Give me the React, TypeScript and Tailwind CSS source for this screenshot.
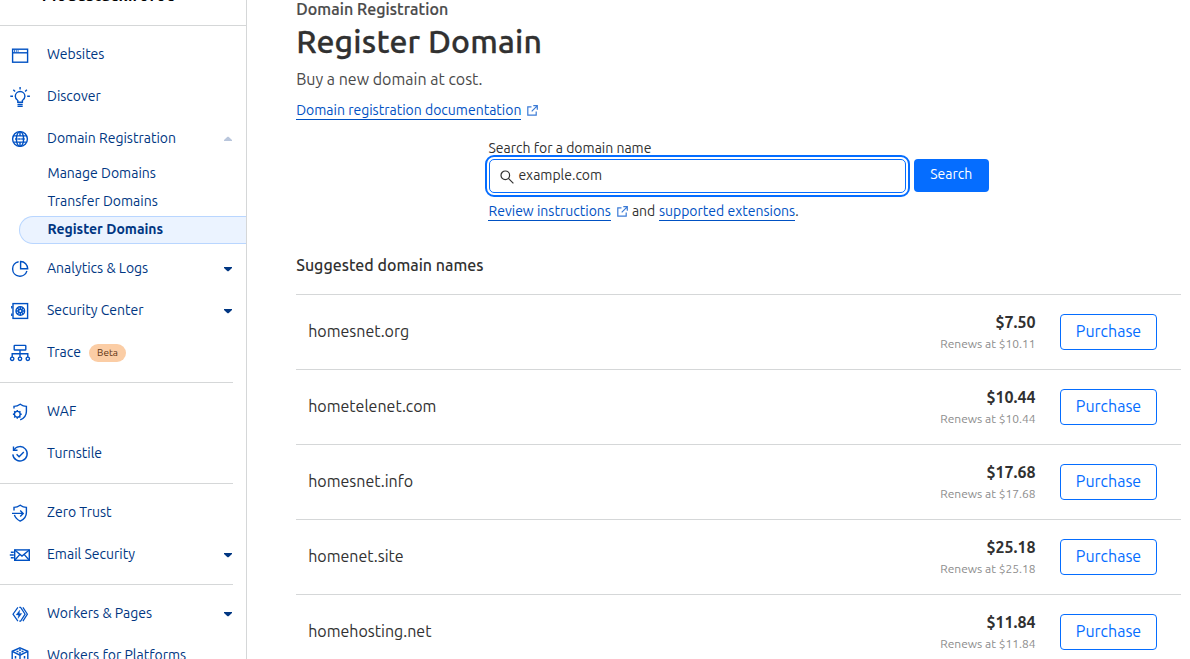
import React from "react";

type IconProps = { children: React.ReactNode };

function Icon({ children }: IconProps) {
  return (
    <svg width="22" height="22" viewBox="0 0 22 22" fill="none" stroke="#0051c3" strokeWidth="1.4" className="shrink-0">
      {children}
    </svg>
  );
}

const icons: Record<string, React.ReactNode> = {
  websites: <><rect x="3.6" y="5.2" width="15" height="13" /><path d="M3.600 8.800h15" /><path d="M5 7h5" strokeDasharray="1 .8" /></>,
  discover: <><path d="M8.8 16.2v-1.7C7.2 13.600 6.300 12 6.300 10.300a4.800 4.800 0 0 1 9.600 0c0 1.700-.9 3.300-2.500 4.200v1.700z" /><path d="M8.500 18.400h5.200M8.500 20.300h5.200M11.100 1v2.500M4.300 3.700l1.800 1.800M17.900 3.700l-1.800 1.800M1.300 10.300h2.700M18.200 10.300h2.700" /></>,
  globe: <><circle cx="11" cy="11" r="7.400" /><ellipse cx="11" cy="11" rx="3.600" ry="7.400" /><path d="M11 3.600v4.600M11 13.800v4.600M4.500 7.900h13M4.500 14.100h13" /><path d="M6 11h10" strokeWidth="1.800" strokeDasharray="2.600 .5" opacity=".7" /></>,
  chart: <><path d="M9.600 3.700a7.300 7.300 0 1 0 8.300 9.300" /><path d="M11.600 3.500v7.300h7.100a7.200 7.200 0 0 0-7.100-7.300z" /></>,
  safe: <><rect x="4" y="3.600" width="14.600" height="14.800" /><circle cx="11.300" cy="11" r="4.300" /><circle cx="11.300" cy="11" r="1.700" /><path d="M11.300 6.700v2.600M11.300 12.700v2.600M7 11h2.600M13 11h2.600M8.300 8l1.800 1.800M12.500 12.200l1.800 1.800M14.300 8l-1.800 1.800M10.100 12.200L8.300 14M2.800 6v2.500M2.800 13.500V16" /></>,
  trace: <><rect x="5.200" y="3.400" width="11.600" height="4.600" rx=".6" /><path d="M11 8v7M3.200 15v-3.300h15.600V15" /><circle cx="3.200" cy="16.800" r="1.700" /><circle cx="11" cy="16.800" r="1.700" /><circle cx="18.800" cy="16.800" r="1.700" /></>,
  waf: <><path d="M5 7.500V5.400c2.200 0 4.300-.8 6.200-2.200 1.900 1.400 4 2.200 6.200 2.200v5c0 3.800-2.200 6.700-6.200 8.500" /><circle cx="8.300" cy="13.300" r="2.900" /><path d="M8.300 8.900v1.600M8.300 16.100v1.600M3.900 13.300h1.600M11.100 13.300h1.600M5.200 10.200l1.200 1.200M10.200 15.200l1.200 1.200M11.400 10.200l-1.200 1.200M6.400 15.200l-1.200 1.200" /></>,
  turnstile: <><path d="M4.900 6.900A7.200 7.200 0 1 1 3.800 11.400" /><path d="M4.500 3.400v3.800h4" /><path d="m7.600 11.300 2.500 2.500 4.700-4.700" /></>,
  zero: <><path d="M5 8.600V5.400c2.200 0 4.300-.8 6.200-2.200 1.900 1.400 4 2.200 6.200 2.200v5c0 3.800-2.200 6.900-6.200 8.700-3-1.400-5-3.500-5.800-6.200" /><path d="M3 11.400h11M11.200 8.400l3 3-3 3" /></>,
  email: <><rect x="5.700" y="5.900" width="14.600" height="10.400" /><path d="m5.700 6 7.300 6 7.300-6M5.700 16.200l5.200-5.800M20.300 16.200l-5.200-5.800M1.800 8.200h3M.8 11h4M1.800 13.800h3" /></>,
  workers: <><path d="M8.900 4.300 4 11.200l4.900 6.900M10.300 4.300h1.300l4.500 6.900-4.500 6.900h-1.300M13.900 4.300l4.500 6.900-4.500 6.900" strokeWidth="1.200" /><path d="M10.800 7 7 11.900h2.500L9 15.500l3.800-5h-2.500z" fill="#0051c3" strokeWidth=".3" /></>,
  platforms: <><path d="m11 2.800 7.800 3.500v9L11 19.300l-7.800-4v-9z" /><path d="m3.200 6.300 7.800 3.900 7.800-3.900M11 10.200v9" /><path d="M10 4.900h2M7.500 6.400h2M12.500 6.400h2M10 7.900h2M6.500 11v2.500M15.500 11v2.500" strokeWidth="1.500" /></>,
};

type NavItemProps = {
  icon: string;
  label: string;
  arrow?: "up" | "down";
  badge?: string;
};

function NavItem({ icon, label, arrow, badge }: NavItemProps) {
  return (
    <a className="flex h-[42px] items-center pr-[14px] pl-[9px]">
      <span className="mt-0.5 flex"><Icon>{icons[icon]}</Icon></span>
      <span className="ml-4 text-[14px] whitespace-nowrap">{label}</span>
      {badge && (
        <span className="mt-px ml-2 flex h-[18px] w-[37px] items-center justify-center rounded-full bg-[#fbcda5] pb-px text-[10px] text-[#5c3212]">
          {badge}
        </span>
      )}
      {arrow && (
        <svg width="8" height="4" viewBox="0 0 8 4" className="mt-0.5 ml-auto overflow-visible">
          {arrow === "up" ? <path d="M3.500 -.3h1L8 3v1H0V3z" fill="#b9c6dc" /> : <path d="M0 0h8v1L4.500 4.300h-1L0 1z" fill="#003682" />}
        </svg>
      )}
    </a>
  );
}

function Divider() {
  return <div className="mt-[9px] mr-[13px] mb-[7px] h-px bg-[#d5d7d8]" />;
}

function Sidebar() {
  return (
    <aside className="h-full w-[247px] shrink-0 overflow-hidden border-r border-[#d5d7d8] text-[#003682]">
      <div className="flex h-[26px] items-start border-b border-[#d5d7d8] pl-[42px]">
        <span className="-mt-[15px] text-[16px] leading-5 font-bold tracking-[0.4px] whitespace-nowrap text-black">Modestack.foroc</span>
      </div>
      <nav className="pt-[7px]">
        <NavItem icon="websites" label="Websites" />
        <NavItem icon="discover" label="Discover" />
        <NavItem icon="globe" label="Domain Registration" arrow="up" />
        <div className="mb-[3px] text-[14px] leading-7">
          <a className="block h-7 pl-[47.5px]">Manage Domains</a>
          <a className="block h-7 pl-[47.5px]">Transfer Domains</a>
          <a className="mt-px ml-[19px] block h-7 rounded-l-full border border-r-0 border-[#b9d6ff] bg-[#ebf3ff] pl-[27.5px] leading-6 font-bold">
            Register Domains
          </a>
        </div>
        <NavItem icon="chart" label="Analytics & Logs" arrow="down" />
        <NavItem icon="safe" label="Security Center" arrow="down" />
        <NavItem icon="trace" label="Trace" badge="Beta" />
        <Divider />
        <NavItem icon="waf" label="WAF" />
        <NavItem icon="turnstile" label="Turnstile" />
        <Divider />
        <NavItem icon="zero" label="Zero Trust" />
        <NavItem icon="email" label="Email Security" arrow="down" />
        <Divider />
        <NavItem icon="workers" label="Workers & Pages" arrow="down" />
        <NavItem icon="platforms" label="Workers for Platforms" />
      </nav>
    </aside>
  );
}

function ExternalIcon() {
  return (
    <svg width="11" height="11" viewBox="0 0 11 11" fill="none" stroke="#3b7bd6" strokeWidth="1.2" className="shrink-0">
      <path d="M4.500 1.800H.8v8.400h8.400V6.500M6.300.7h4v4M10.200.8 4.700 6.300" />
    </svg>
  );
}

const domains = [
  { name: "homesnet.org", price: "$7.50", renew: "$10.11" },
  { name: "hometelenet.com", price: "$10.44", renew: "$10.44" },
  { name: "homesnet.info", price: "$17.68", renew: "$17.68" },
  { name: "homenet.site", price: "$25.18", renew: "$25.18" },
  { name: "homehosting.net", price: "$11.84", renew: "$11.84" },
];

export default function App() {
  return (
    <div className="flex h-[659px] w-[1190px] overflow-hidden bg-white font-['Ubuntu','Noto_Sans',sans-serif] text-[#313131]">
      <Sidebar />
      <main className="min-w-0 flex-1 pr-[9px] pl-[49.2px] whitespace-nowrap">
        <div className="h-5 text-[16px] leading-[18px] font-medium tracking-[0.08px] text-[#4a4a4a] [-webkit-text-stroke:0.2px]">Domain Registration</div>
        <h1 className="h-11 text-[32px] leading-[42px] font-medium tracking-[0.17px] [-webkit-text-stroke:0.3px]">Register Domain</h1>
        <p className="mt-[5px] h-5 text-[16px] leading-5 text-[#4a4a4a]">Buy a new domain at cost.</p>
        <div className="mt-[11px] flex h-5 items-center text-[14px] text-[#0051c3]">
          <a className="h-5 border-b border-[#0051c3] leading-5">Domain registration documentation</a>
          <span className="mt-px ml-1.5"><ExternalIcon /></span>
        </div>
        <div className="mt-[18px] ml-[192.300px]">
          <label className="block h-5 text-[14px] leading-5">Search for a domain name</label>
          <div className="mt-px ml-[0.300px] flex">
            <div className="flex h-[34px] w-[417px] items-center rounded-[5px] border border-[#056dff] pl-[10px] outline-2 outline-offset-2 outline-[#056dff]">
              <svg width="14" height="14" viewBox="0 0 14 14" fill="none" stroke="#313131" strokeWidth="1.200" className="mt-px">
                <circle cx="5.300" cy="5.300" r="4.300" /><path d="m8.400 8.400 5 5" />
              </svg>
              <span className="-mt-0.5 ml-[4.600px] text-[14px] leading-5">example.com</span>
            </div>
            <button className="ml-2 h-[33px] w-[75px] rounded-[4px] bg-[#056dff] pb-0.5 text-[14px] text-white">Search</button>
          </div>
          <div className="mt-2 flex h-5 items-start text-[14px] leading-[21px]">
            <a className="h-5 border-b border-[#0051c3] text-[#0051c3]">Review instructions</a>
            <span className="mt-[5px] ml-1.5"><ExternalIcon /></span>
            <span className="mr-[3.600px] ml-1">and</span>
            <a className="h-5 border-b border-[#0051c3] text-[#0051c3]">supported extensions</a>
            <span>.</span>
          </div>
        </div>
        <h2 className="mt-[34px] h-5 text-[16px] leading-5 font-medium">Suggested domain names</h2>
        <ul className="mt-[19px]">
          {domains.map((d) => (
            <li key={d.name} className="flex h-[75px] items-center border-t border-[#d5d7d8] pr-6 pl-3">
              <span className="-mt-0.5 text-[16px]">{d.name}</span>
              <div className="mt-0.5 ml-auto text-right">
                <div className="text-[16px] leading-5 font-semibold">{d.price}</div>
                <div className="mt-0.5 text-[12px] leading-5 text-[#8d8d8d]">Renews at {d.renew}</div>
              </div>
              <button className="ml-[24.500px] h-9 w-[97px] rounded-[4px] border border-[#056dff] pb-0.5 text-[16px] text-[#056dff]">
                Purchase
              </button>
            </li>
          ))}
        </ul>
      </main>
    </div>
  );
}
